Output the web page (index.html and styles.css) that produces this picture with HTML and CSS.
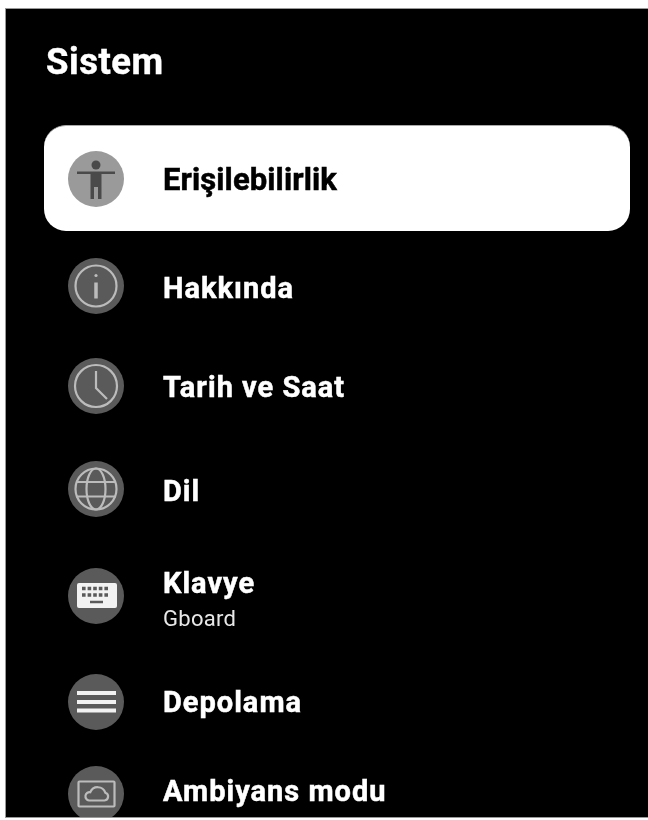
FILE: index.html
```html
<!DOCTYPE html>
<html lang="tr">
<head>
<meta charset="utf-8">
<title>Sistem</title>
<link rel="stylesheet" href="styles.css">
</head>
<body>
<main class="panel">
  <h1 class="title">Sistem</h1>
  <ul class="list">
    <li class="row row-selected">
      <span class="badge badge-light">
        <svg viewBox="0 0 56 56"><circle cx="28" cy="14" r="4.500" fill="#4a4a4a"/><path d="M9 20.500h38v2.500H33.500V48h-3.500V36h-4v12h-3.500V23H9z" fill="#4a4a4a"/></svg>
      </span>
      <span class="label">Erişilebilirlik</span>
    </li>
    <li class="row row-about">
      <span class="badge">
        <svg viewBox="0 0 56 56" class="line"><circle cx="28" cy="28" r="20.500"/><path d="M28 24.500v16" stroke-width="3.500"/><circle cx="28" cy="17.500" r="1.600" fill="#bcbcbc" stroke="none"/></svg>
      </span>
      <span class="label">Hakkında</span>
    </li>
    <li class="row row-time">
      <span class="badge">
        <svg viewBox="0 0 56 56" class="line"><circle cx="28" cy="28" r="21"/><path d="M28 13v17l11 11"/></svg>
      </span>
      <span class="label">Tarih ve Saat</span>
    </li>
    <li class="row row-lang">
      <span class="badge">
        <svg viewBox="0 0 56 56" class="line"><circle cx="28" cy="28" r="20.500"/><ellipse cx="28" cy="28" rx="9.500" ry="20.500"/><path d="M8 21h40M8 35.500h40"/></svg>
      </span>
      <span class="label">Dil</span>
    </li>
    <li class="row row-keyboard">
      <span class="badge">
        <svg viewBox="0 0 56 56"><rect x="9" y="15" width="40" height="25" rx="2" fill="#f2f2f2"/><path d="M14 20.500h28M14 27h28" stroke="#5a5a5a" stroke-width="3.500" stroke-dasharray="3.600 2" fill="none"/><path d="M22 34h13" stroke="#5a5a5a" stroke-width="2.500"/></svg>
      </span>
      <span class="text">
        <span class="label">Klavye</span>
        <span class="sub">Gboard</span>
      </span>
    </li>
    <li class="row row-storage">
      <span class="badge">
        <svg viewBox="0 0 56 56"><path d="M9 19h39M9 28h39M9 36.500h39" stroke="#f2f2f2" stroke-width="4" fill="none"/></svg>
      </span>
      <span class="label">Depolama</span>
    </li>
    <li class="row row-ambient">
      <span class="badge">
        <svg viewBox="0 0 56 56" class="line"><rect x="10.500" y="15.500" width="36" height="25" rx="1"/><path d="M21 34.500h15.500a4 4 0 0 0 .8-7.800 8 8 0 0 0-15-.5 4.200 4.200 0 0 0-1.300 8.300z"/></svg>
      </span>
      <span class="label">Ambiyans modu</span>
    </li>
  </ul>
</main>
</body>
</html>
```
FILE: styles.css
```css
html, body {
  margin: 0;
  height: 820px;
  overflow: hidden;
  background: #fff;
}
.panel {
  box-sizing: border-box;
  height: 810px;
  margin: 8px 0 0 5px;
  padding: 34px 18px 0 38px;
  background: #000;
  border-top: 1px solid #999;
  border-left: 1px solid #999;
  border-bottom: 1px solid #999;
  color: #fff;
  font-family: Roboto, "Liberation Sans", sans-serif;
  overflow: hidden;
  filter: blur(0.5px);
}
.title {
  margin: 0 0 0 2px;
  font-size: 36.500px;
  line-height: 38px;
  font-weight: 700;
  letter-spacing: 0.5px;
  -webkit-text-stroke: 0.4px currentColor;
}
.list {
  list-style: none;
  margin: 44px 0 0;
  padding: 0;
}
.row {
  display: flex;
  align-items: center;
  gap: 39px;
  height: 58px;
  padding-left: 24px;
}
.row-selected {
  height: 106px;
  background: #fff;
  color: #000;
  border-radius: 22px;
  border-top: 1px solid #aaa;
  box-sizing: border-box;
}
.row-about { margin-top: 26px; }
.row-time { margin-top: 42px; }
.row-lang { margin-top: 45px; }
.row-keyboard { margin-top: 49px; }
.row-storage { margin-top: 48px; }
.row-ambient { margin-top: 34px; }
.badge {
  flex: none;
  width: 56px;
  height: 56px;
  border-radius: 50%;
  background: #5a5a5a;
}
.badge-light { background: #9a9a9a; }
.badge svg {
  display: block;
  width: 56px;
  height: 56px;
}
.line {
  fill: none;
  stroke: #bcbcbc;
  stroke-width: 2.200;
}
.label {
  display: block;
  font-size: 29px;
  line-height: 34px;
  font-weight: 700;
  letter-spacing: 1px;
  -webkit-text-stroke: 0.5px currentColor;
}
.row-selected .label {
  padding-top: 2px;
  font-size: 31px;
  letter-spacing: 0.1px;
}
.row-about .label { padding-top: 4px; }
.row-time .label { padding-top: 2px; }
.row-lang .label { padding-top: 3px; }
.row-keyboard .label { padding-top: 5px; }
.row-ambient .label { padding-bottom: 6px; }
.sub {
  display: block;
  margin-top: 6px;
  font-size: 22px;
  line-height: 26px;
  font-weight: 400;
  letter-spacing: 0.3px;
  color: #e8e8e8;
}
```
